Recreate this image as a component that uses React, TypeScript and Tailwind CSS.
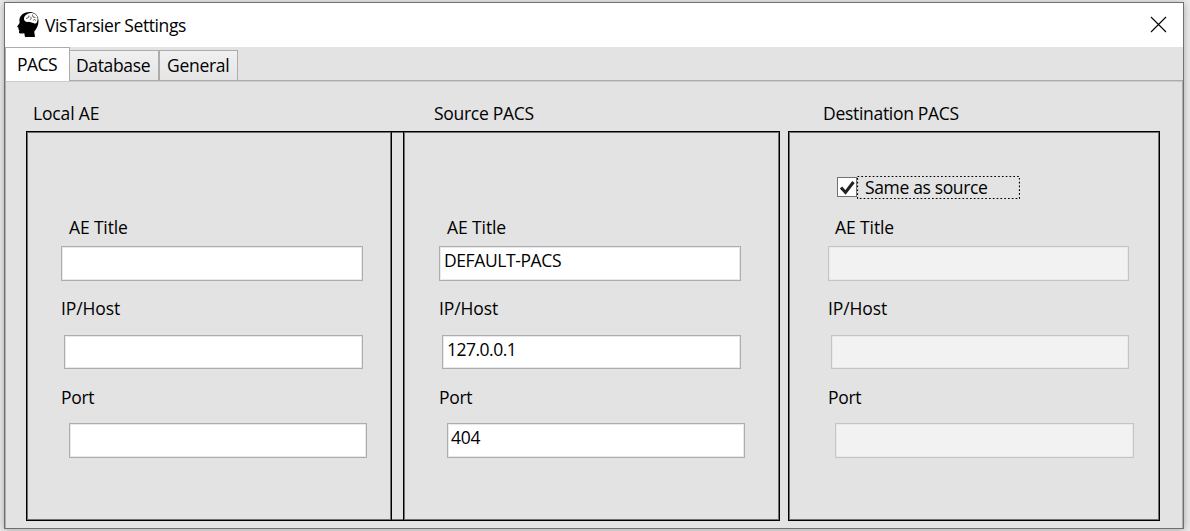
import React from 'react';

type Field = { label: string; value: string; labelCls: string; boxCls: string };

const text = "font-['Open_Sans','Noto_Sans',sans-serif] text-[17.5px] leading-6 whitespace-nowrap text-black";

function Fields({ fields, disabled }: { fields: Field[]; disabled?: boolean }) {
  return (
    <>
      {fields.map((f) => (
        <React.Fragment key={f.label}>
          <div className={`h-6 leading-[22px] ${f.labelCls}`}>{f.label}</div>
          <div
            className={`flex items-start border ${f.boxCls} ${
              disabled
                ? 'border-[#c4c4c6] bg-[#f2f2f2] shadow-[inset_0_0_0_1px_#e9e9e9]'
                : 'border-[#abadb3] bg-white shadow-[inset_0_0_0_1px_#e9e9eb]'
            }`}
          >
            <span className="mt-px">{f.value}</span>
          </div>
        </React.Fragment>
      ))}
    </>
  );
}

const local: Field[] = [
  { label: 'AE Title', value: '', labelCls: 'ml-[42px] tracking-[-0.15px]', boxCls: 'ml-[34px] mt-[6px] w-[302px] h-[35px]' },
  { label: 'IP/Host', value: '', labelCls: 'mt-4 ml-[34px] tracking-[-0.1px]', boxCls: 'ml-[37px] mt-[14px] w-[299px] h-[34px]' },
  { label: 'Port', value: '', labelCls: 'mt-[17px] ml-[34px] tracking-[-0.3px]', boxCls: 'ml-[42px] mt-[13px] w-[298px] h-[35px]' },
];
const source: Field[] = [
  { label: 'AE Title', value: 'DEFAULT-PACS', labelCls: 'ml-[43px] tracking-[-0.1px]', boxCls: 'ml-[35px] mt-[6px] w-[302px] h-[35px] pl-1 tracking-[-0.4px]' },
  { label: 'IP/Host', value: '127.0.0.1', labelCls: 'mt-4 ml-[35px] tracking-[-0.1px]', boxCls: 'ml-[38px] mt-[14px] w-[299px] h-[34px] pl-1 tracking-[-0.5px]' },
  { label: 'Port', value: '404', labelCls: 'mt-[17px] ml-[35px] tracking-[-0.3px]', boxCls: 'ml-[43px] mt-[13px] w-[298px] h-[35px] pl-[3px] tracking-[-0.3px]' },
];
const destination: Field[] = [
  { label: 'AE Title', value: '', labelCls: 'ml-[46px] tracking-[-0.1px]', boxCls: 'ml-[39px] mt-[6px] w-[301px] h-[35px]' },
  { label: 'IP/Host', value: '', labelCls: 'mt-4 ml-[39px] tracking-[-0.1px]', boxCls: 'ml-[42px] mt-[14px] w-[298px] h-[34px]' },
  { label: 'Port', value: '', labelCls: 'mt-[17px] ml-[39px] tracking-[-0.3px]', boxCls: 'ml-[46px] mt-[13px] w-[299px] h-[35px]' },
];

function HeadIcon() {
  return (
    <svg width="22" height="25" viewBox="0 0 22 25" className="ml-[12px] mt-[9px] shrink-0">
      <path
        d="M13 0C7 0 3 3 2.4 7.500L2.6 11L0 14.800L1.6 15.800L1.3 17.200L2.2 18L2 20.800C2.5 22 5 21.400 7.3 21.200L8 25H18L17.2 19.500C19.500 17 21.500 13.500 21.500 9C21.500 3.500 18 0 13 0Z"
        fill="#000"
      />
      <path
        d="M7.500 8.500C6.200 6.500 7.500 3.500 10 2.300C12.500 0.600 16.500 0.700 18.500 2.600C20.700 4.500 21.200 7.500 20.200 9.500C20 11.500 17.800 12.200 16.500 10.900C14.500 11 13.500 9.700 11.500 9.700C9.800 10.200 8.300 9.800 7.500 8.500Z"
        fill="#fff"
      />
      <path
        d="M9 6.500L11.500 5.500L12 3.500M13 8L14.500 6L13 4.500M15.500 2.500L16 5L18.500 5.500M16 8.500L17.500 7.500L19 8.500"
        fill="none"
        stroke="#000"
        strokeWidth="0.6"
      />
    </svg>
  );
}

export default function App() {
  return (
    <div className={`h-[531px] w-[1190px] overflow-hidden bg-[#ececec] pt-[2px] pl-[4px] ${text}`}>
      <div className="flex h-[527px] w-[1180px] flex-col border border-[#707070] bg-[#e3e3e3] shadow-[0_1px_8px_rgba(0,0,0,0.3)]">
        <header className="flex h-[44px] shrink-0 bg-white">
          <HeadIcon />
          <h1 className="mt-[10px] ml-[6px] tracking-[-0.42px]">VisTarsier Settings</h1>
          <svg width="17" height="17" viewBox="0 0 17 17" className="mt-[13px] mr-[16px] ml-auto">
            <path d="M1 1L16 16M16 1L1 16" stroke="#000" strokeWidth="1.100" fill="none" />
          </svg>
        </header>
        <nav className="flex h-[33px] shrink-0 items-end">
          <div className="z-10 -mb-px h-[34px] w-[65px] border border-b-0 border-[#acacac] bg-white pt-[4px] pl-[11px] tracking-[-0.5px]">PACS</div>
          <div className="h-[30px] w-[89px] border border-b-0 border-l-0 border-[#acacac] bg-linear-to-b from-[#f0f0f0] to-[#e5e5e5] pt-[2px] pl-[6px] tracking-[-0.35px]">Database</div>
          <div className="h-[30px] w-[79px] border border-b-0 border-[#acacac] bg-linear-to-b from-[#f0f0f0] to-[#e5e5e5] pt-[2px] pl-[7px] tracking-[-0.3px]">General</div>
        </nav>
        <main className="flex flex-1 flex-col border border-b-0 border-[#acacac] pl-[20px] shadow-[inset_0_1px_0_#cccccc]">
          <div className="flex h-[50px] shrink-0 pt-[20px]">
            <div className="w-[400px] pl-[7px] tracking-[-0.15px]">Local AE</div>
            <div className="w-[389px] pl-[8px] tracking-[-0.3px]">Source PACS</div>
            <div className="pl-[8px] tracking-[-0.3px]">Destination PACS</div>
          </div>
          <div className="flex h-[390px] shrink-0">
            <section className="w-[366px] border border-black pt-[84px] shadow-[inset_0_0_0_1px_#707070]">
              <Fields fields={local} />
            </section>
            <div className="w-[11px] border-y border-black shadow-[inset_0_1px_0_#707070,inset_0_-1px_0_#707070]" />
            <section className="w-[377px] border border-black pt-[84px] shadow-[inset_0_0_0_1px_#707070]">
              <Fields fields={source} />
            </section>
            <section className="ml-[8px] w-[372px] border border-black shadow-[inset_0_0_0_1px_#707070]">
              <div className="flex h-[84px] pt-[44px] pl-[48px]">
                <div className="mt-[1px] h-[20px] w-[20px] border border-[#707070] bg-white">
                  <svg width="18" height="18" viewBox="0 0 18 18">
                    <path d="M3 9.500L7.500 14.500L15.500 4" fill="none" stroke="#212121" strokeWidth="3" />
                  </svg>
                </div>
                <div className="relative h-[23px] w-[163px] pt-px pl-[8px] leading-[21px] tracking-[-0.35px]">
                  <svg className="absolute inset-0" width="163" height="23" viewBox="0 0 163 23">
                    <rect x="0.5" y="0.5" width="162" height="22" fill="none" stroke="#000" strokeWidth="1.200" strokeDasharray="1.7 2.1" />
                  </svg>
                  Same as source
                </div>
              </div>
              <Fields fields={destination} disabled />
            </section>
          </div>
        </main>
      </div>
    </div>
  );
}
